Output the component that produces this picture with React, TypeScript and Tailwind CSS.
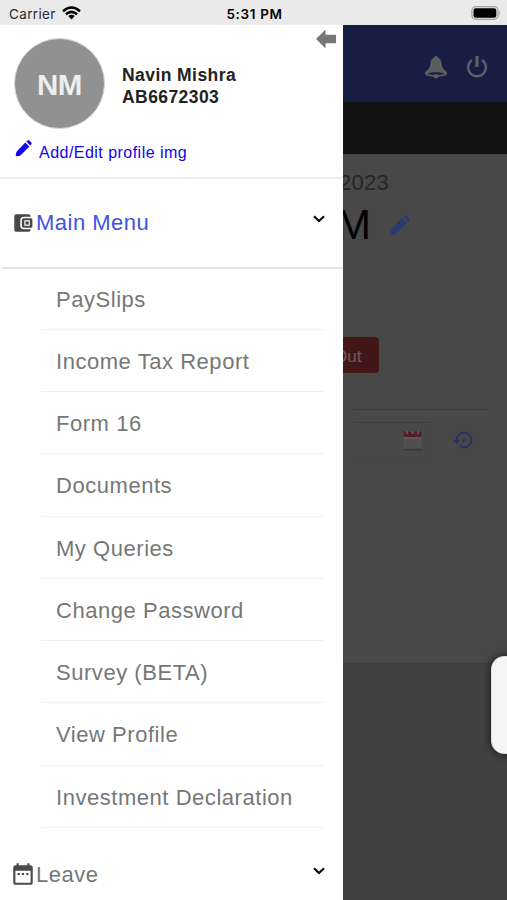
import { MdDateRange, MdSettingsBackupRestore } from "react-icons/md";

const menuItems = [
  "PaySlips",
  "Income Tax Report",
  "Form 16",
  "Documents",
  "My Queries",
  "Change Password",
  "Survey (BETA)",
  "View Profile",
  "Investment Declaration",
];

function StatusBar() {
  return (
    <header className="grid h-[25px] shrink-0 grid-cols-3 items-center bg-[#eaeaea] pl-[9px] pr-[6px] pt-[2px] font-['Inter',sans-serif] text-black">
      <div className="flex items-center gap-[6px]">
        <span className="text-[13.5px] leading-4 tracking-[0.35px] text-[#2c2c2c]">Carrier</span>
        <svg className="-mt-px h-[14px] w-[19px]" viewBox="0 0 19 14" fill="none" stroke="currentColor" strokeWidth="2.5">
          <path d="M1 5.2Q9.500-2.200 18 5.200" />
          <path d="M3.900 8.300Q9.500 3.500 15.100 8.300" />
          <path d="M6.300 10.100Q9.500 7.300 12.700 10.100L9.500 13.500Z" fill="currentColor" stroke="none" />
        </svg>
      </div>
      <span className="-ml-px text-center text-[13.5px] font-semibold leading-4 tracking-[0.65px]">5:31 PM</span>
      <svg className="-mt-px h-[14px] w-[30px] justify-self-end" viewBox="0 0 30 14">
        <rect x="0.800" y="0.700" width="26.200" height="12.600" rx="4" fill="#e4e4e4" stroke="#a3a3a3" strokeWidth="1.200" />
        <rect x="2.500" y="2.300" width="22.800" height="9.400" rx="2.300" fill="#000" />
        <path d="M28.200 4.500Q30.200 7 28.200 9.500Z" fill="#a3a3a3" />
      </svg>
    </header>
  );
}

function PencilIcon({ className }: { className: string }) {
  return (
    <svg className={className} viewBox="0 0 20 20" fill="currentColor">
      <path d="M12.100 2.900L16.900 7.700L7 17.600Q6.400 18.200 5.600 18.400L2.400 19.200Q.6 19.500.9 17.700L1.600 14.500Q1.800 13.700 2.400 13.100Z" />
      <path d="M13.300 1.900L14.800.6Q15.900-.2 16.900.7L19.100 2.900Q20 3.900 19.200 5L17.900 6.500Z" />
    </svg>
  );
}

function WalletIcon() {
  return (
    <svg className="h-[18px] w-[19px]" viewBox="0 0 19 18" fill="#484848">
      <path d="M2 .3H14.500Q16.500.3 16.900 2.800H10Q6.300 2.800 6.300 6.300V11.700Q6.300 15.200 10 15.200H16.900Q16.500 17.700 14.500 17.700H2Q.3 17.700.3 16V2Q.3.3 2 .3Z" />
      <path
        fillRule="evenodd"
        d="M9.700 4.300H17.200Q18.400 4.300 18.400 5.500V12.500Q18.400 13.700 17.200 13.700H9.700Q7.900 13.700 7.900 12V6Q7.900 4.300 9.700 4.300ZM10.300 6.300V11.700H15.800V6.300Z"
      />
      <rect x="11.500" y="7.400" width="3.200" height="3.200" />
    </svg>
  );
}

function BellIcon() {
  return (
    <svg className="h-6 w-6" viewBox="0 0 24 24" fill="#5b5e5f">
      <path d="M12 1C10.800 1 10.300 1.700 10.200 2.600C7.600 3.500 6.600 5.700 6.400 8.500C6.100 12.500 4.300 14.500 1.900 16.600C1 17.400.7 18.200.9 19C1.300 20.700 5.500 21.400 9 21.500C9.500 22.900 10.700 23.300 12 23.300S14.500 22.900 15 21.500C18.500 21.400 22.700 20.700 23.100 19C23.300 18.200 23 17.400 22.100 16.600C19.700 14.500 17.900 12.500 17.600 8.500C17.400 5.700 16.400 3.500 13.800 2.600C13.700 1.700 13.200 1 12 1Z" />
      <path d="M3.300 18.500C7.500 16.900 16.500 16.900 20.700 18.500C19.500 19.300 17 19.700 14.900 19.900C14.300 18.900 9.700 18.900 9.100 19.900C7 19.700 4.500 19.300 3.300 18.500Z" fill="#1c2247" />
    </svg>
  );
}

function PowerIcon() {
  return (
    <svg className="h-6 w-[22px]" viewBox="0 0 22 24" fill="none" stroke="#5d6064">
      <path d="M6 5A8.900 8.900 0 1 0 16 5" strokeWidth="2.300" />
      <path d="M11 1V12" strokeWidth="3.200" />
    </svg>
  );
}

function CalendarIcon() {
  return (
    <svg className="h-[21px] w-[19px]" viewBox="0 0 19 21">
      <rect x="0.500" y="1.500" width="18" height="18" rx="1" fill="#505050" />
      <path d="M0.500 8H18.500" stroke="#626262" />
      <path d="M0.500 1.500H18.500V7H.5Z" fill="#531f27" />
      <path d="M4 1V4M9.500 1V4M15 1V4" stroke="#666" strokeWidth="1.500" />
      <path d="M.5 19.500H18.500" stroke="#373737" strokeWidth="1.500" />
      <path d="M3 11H16M3 14H16M3 17H16" stroke="#4a4a4a" strokeDasharray="2 1" />
    </svg>
  );
}

function Chevron() {
  return (
    <svg className="h-[8px] w-3" viewBox="0 0 12 8" fill="none" stroke="#080808" strokeWidth="2.100">
      <path d="M1 1.300L6 6.100L11 1.300" />
    </svg>
  );
}

// Dashboard dimmed by the open drawer
function Dashboard() {
  return (
    <main className="flex h-full flex-col bg-[#414141]">
      <div className="flex h-[77px] shrink-0 items-center justify-end gap-[18px] border-b border-[#151a35] bg-[#171d43] pr-[19px] pt-[8px]">
        <BellIcon />
        <PowerIcon />
      </div>
      <div className="h-[52px] shrink-0 bg-[#131313]" />
      <section className="flex h-[510px] shrink-0 flex-col border-b border-[#3c3c3c] bg-[#484848] pl-[339px]">
        <p className="mt-[15px] h-[28px] text-[22px] leading-[28px] tracking-[0.3px] text-[#262626]">2023</p>
        <div className="flex h-[56px] items-center">
          <span className="-ml-[3px] text-[42px] leading-[56px] text-black">M</span>
          <PencilIcon className="ml-[18px] h-[21px] w-[21px] text-[#2c3871]" />
        </div>
        <div className="mt-[84px] flex h-[36px] w-10 items-center rounded-r-[4px] bg-[#431717] pt-[4px] text-[17px] text-[#72595a]">
          <span className="-ml-[5px]">Out</span>
        </div>
        <div className="ml-[14px] mt-[36px] w-[135px] border-t-[1.500px] border-[#3b3b3b]" />
        <div className="ml-[14px] mt-[12px] flex h-[36px] items-center">
          <div className="flex h-full w-[77px] items-center justify-end border border-l-0 border-[#444] border-t-[#3d3d3d] pr-[7px]">
            <CalendarIcon />
          </div>
          <MdSettingsBackupRestore className="ml-[23px] h-[22px] w-[22px] text-[#252f66]" />
        </div>
      </section>
    </main>
  );
}

function Drawer() {
  return (
    <aside className="absolute inset-y-0 left-0 flex w-[343px] flex-col overflow-hidden bg-white">
      <div className="flex h-[154px] shrink-0 flex-col border-b-2 border-[#eeeeee]">
        <div className="flex h-[104px]">
          <div className="ml-[14px] mt-[13px] flex h-[91px] w-[91px] shrink-0 items-center justify-center rounded-full border border-[#d8d8d8] bg-[#919191] pt-[4px] text-[29.5px] font-bold tracking-[-0.500px] text-[#eeeeee]">
            NM
          </div>
          <div className="ml-[17px] mt-[38.500px] flex-1 whitespace-nowrap text-[17.500px] font-bold leading-[22px] tracking-[0.430px] text-[#222]">
            <p>Navin Mishra</p>
            <p>AB6672303</p>
          </div>
          <svg className="mr-[6px] mt-[4px] h-[20px] w-[22px]" viewBox="0 0 22 21" fill="#777">
            <path d="M0.500 10.500L10.500 0.500V6H21.500V15H10.500V20.500Z" />
          </svg>
        </div>
        <a className="flex h-[46px] items-center pl-[15px] text-[#1204ee]">
          <PencilIcon className="-mt-[7px] h-[17px] w-[17px]" />
          <span className="ml-[7px] pt-px text-[16px] tracking-[0.470px]">Add/Edit profile img</span>
        </a>
      </div>
      <button className="ml-[2px] flex h-[89.500px] shrink-0 items-center border-b-2 border-[#e3e5e6] pl-[12px] pr-[18px] text-left">
        <WalletIcon />
        <span className="ml-[3px] flex-1 text-[22px] tracking-[0.500px] text-[#4052e4]">Main Menu</span>
        <span className="-mt-[8px]">
          <Chevron />
        </span>
      </button>
      <ul className="-mt-px ml-[41px] w-[283px] shrink-0">
        {menuItems.map((item) => (
          <li
            key={item}
            className="flex h-[62.250px] items-center border-b-[1.500px] border-[#f1f1f1] pl-[15px] pt-[2px] text-[22px] tracking-[0.540px] text-[#777]"
          >
            {item}
          </li>
        ))}
      </ul>
      <button className="ml-[2px] flex h-[93px] shrink-0 items-center pl-[8px] pr-[18px] text-left">
        <MdDateRange className="h-[26px] w-[26px] text-[#4a4a4a]" />
        <span className="flex-1 text-[22px] tracking-[0.500px] text-[#777]">Leave</span>
        <span className="-mt-[7px]">
          <Chevron />
        </span>
      </button>
    </aside>
  );
}

export default function App() {
  return (
    <div className="flex h-[900px] w-[507px] flex-col overflow-hidden font-['Liberation_Sans',Arial,sans-serif]">
      <StatusBar />
      <div className="relative min-h-0 flex-1 overflow-hidden">
        <Dashboard />
        <Drawer />
        <div className="absolute -right-4 top-[630.500px] h-[98px] w-8 rounded-[13px] border border-[#ddd] bg-[#f5f5f5] shadow-[0_0_9px_rgba(0,0,0,0.700)]" />
      </div>
    </div>
  );
}
